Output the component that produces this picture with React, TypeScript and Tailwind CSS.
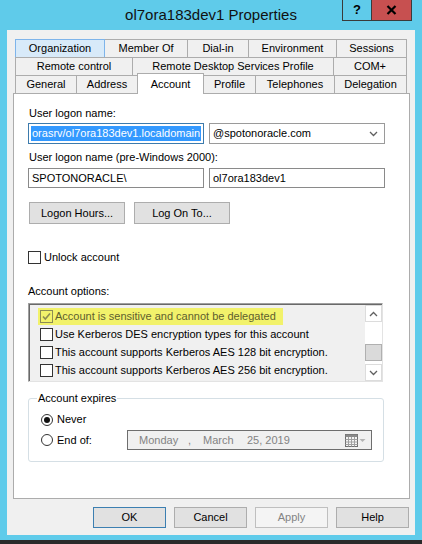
import React from "react";

function Check({ checked = false, hl = false }: { checked?: boolean; hl?: boolean }) {
  return (
    <span
      className={
        hl
          ? "w-[13px] h-[13px] border border-[#8c8c55] bg-transparent inline-flex items-center justify-center shrink-0"
          : "w-[13px] h-[13px] border border-[#333333] bg-white inline-flex items-center justify-center shrink-0"
      }
    >
      {checked && (
        <svg width="11" height="11" viewBox="0 0 11 11">
          <path d="M2 5.5 L4.3 8 L9 2.5" fill="none" stroke="#8c8c50" strokeWidth="1.6" />
        </svg>
      )}
    </span>
  );
}

function Radio({ checked = false }: { checked?: boolean }) {
  return (
    <span className="w-[12px] h-[12px] rounded-full border border-[#333333] bg-white inline-flex items-center justify-center shrink-0">
      {checked && <span className="w-[6px] h-[6px] rounded-full bg-[#111111]" />}
    </span>
  );
}

function Chevron({ up = false }: { up?: boolean }) {
  return (
    <svg width="9" height="6" viewBox="0 0 9 6">
      <path
        d={up ? "M1 5 L4.5 1.5 L8 5" : "M1 1 L4.5 4.5 L8 1"}
        fill="none"
        stroke="#606060"
        strokeWidth="1.3"
      />
    </svg>
  );
}

export default function App() {
  const row1 = [
    { label: "Organization", cls: "w-[90px] border-l border-r border-t border-[#7eb4ea] bg-[#d8eaf9]" },
    { label: "Member Of", cls: "w-[82px] border-t border-[#acacac] bg-[#f0f0f0]" },
    { label: "Dial-in", cls: "w-[61px] border-t border-l border-[#acacac] bg-[#f0f0f0]" },
    { label: "Environment", cls: "w-[88px] border-t border-l border-[#acacac] bg-[#f0f0f0]" },
    { label: "Sessions", cls: "w-[71px] border-t border-l border-r border-[#acacac] bg-[#f0f0f0]" },
  ];
  const row2 = [
    { label: "Remote control", cls: "w-[117px] border-t border-l border-[#acacac] bg-[#f0f0f0]" },
    { label: "Remote Desktop Services Profile", cls: "w-[201px] border-t border-l border-[#acacac] bg-[#f0f0f0]" },
    { label: "COM+", cls: "w-[74px] border-t border-l border-r border-[#acacac] bg-[#f0f0f0]" },
  ];

  return (
    <div className="w-[422px] h-[544px] bg-[#5fcbea] flex flex-col overflow-hidden font-['Liberation_Sans',Arial,sans-serif] text-[11px] text-black">
      {/* Title bar */}
      <div className="relative h-[30px] shrink-0 flex items-center justify-center">
        <span className="text-[15px] text-[#111111] pt-[1px]">ol7ora183dev1 Properties</span>
        <div className="absolute right-[10px] top-0 flex h-[21px]">
          <div className="w-[29px] h-[21px] border-l border-b border-[#3a3a3a] flex items-center justify-center text-[13px] font-bold text-black">
            ?
          </div>
          <div className="w-[41px] h-[21px] border-l border-r border-b border-[#3a3a3a] bg-[#c75050] flex items-center justify-center">
            <svg width="11" height="10" viewBox="0 0 11 10">
              <path d="M1.5 1 L9.5 9 M9.5 1 L1.5 9" stroke="#000" strokeWidth="2.2" />
            </svg>
          </div>
        </div>
      </div>

      {/* Client area */}
      <div className="mx-[7px] h-[505px] shrink-0 bg-[#f0f0f0] flex flex-col">
        {/* Tabs */}
        <div className="ml-[8px] mt-[9px] flex flex-col">
          <div className="flex h-[18px]">
            {row1.map((t) => (
              <div key={t.label} className={`${t.cls} h-[18px] flex items-center justify-center leading-none`}>
                {t.label}
              </div>
            ))}
          </div>
          <div className="flex h-[18px]">
            {row2.map((t) => (
              <div key={t.label} className={`${t.cls} h-[18px] flex items-center justify-center leading-none`}>
                {t.label}
              </div>
            ))}
          </div>
          <div className="flex h-[18px] items-end">
            <div className="w-[61px] h-[18px] border-t border-l border-[#acacac] bg-[#f0f0f0] flex items-center justify-center">General</div>
            <div className="w-[61px] h-[18px] border-t border-l border-[#acacac] bg-[#f0f0f0] flex items-center justify-center">Address</div>
            <div className="relative z-10 w-[67px] h-[21px] -mb-px border-t border-l border-r border-[#acacac] bg-white flex items-start justify-center pt-[2px]">
              Account
            </div>
            <div className="w-[51px] h-[18px] border-t border-[#acacac] bg-[#f0f0f0] flex items-center justify-center">Profile</div>
            <div className="w-[79px] h-[18px] border-t border-l border-[#acacac] bg-[#f0f0f0] flex items-center justify-center">Telephones</div>
            <div className="w-[73px] h-[18px] border-t border-l border-r border-[#acacac] bg-[#f0f0f0] flex items-center justify-center">Delegation</div>
          </div>
        </div>

        {/* Panel */}
        <div className="ml-[6px] w-[397px] h-[406px] bg-white border border-[#acacac] flex flex-col pl-[14px]">
          <div className="mt-[12px] h-[15px] leading-[15px] pl-[1px]">User logon name:</div>
          <div className="mt-[2px] flex gap-[5px]">
            <div className="w-[176px] h-[21px] border border-[#3d7bad] bg-white flex items-center pl-[2px] overflow-hidden">
              <span className="bg-[#3399ff] text-white leading-[15px] px-[1px] whitespace-nowrap">
                orasrv/ol7ora183dev1.localdomain
              </span>
            </div>
            <div className="w-[176px] h-[21px] border border-[#9a9a9a] bg-white flex items-center justify-between pl-[3px] pr-[6px]">
              <span>@spotonoracle.com</span>
              <Chevron />
            </div>
          </div>
          <div className="mt-[6px] h-[15px] leading-[15px] pl-[1px]">User logon name (pre-Windows 2000):</div>
          <div className="mt-[3px] flex gap-[5px]">
            <div className="w-[176px] h-[20px] border border-[#8a8a8a] bg-white flex items-center pl-[3px]">SPOTONORACLE\</div>
            <div className="w-[176px] h-[20px] border border-[#8a8a8a] bg-white flex items-center pl-[3px]">ol7ora183dev1</div>
          </div>
          <div className="mt-[14px] ml-[1px] flex gap-[9px]">
            <div className="w-[96px] h-[22px] border border-[#adadad] bg-[#e1e1e1] flex items-center justify-center">Logon Hours...</div>
            <div className="w-[96px] h-[22px] border border-[#adadad] bg-[#e1e1e1] flex items-center justify-center">Log On To...</div>
          </div>

          <div className="mt-[26px] h-[15px] flex items-center gap-[3px]">
            <Check />
            <span>Unlock account</span>
          </div>

          <div className="mt-[19px] h-[15px] leading-[15px]">Account options:</div>

          {/* Options list */}
          <div className="mt-[4px] w-[355px] h-[79px] border-t border-l border-[#a0a0a0] border-b border-r border-b-[#e3e3e3] border-r-[#e3e3e3] flex">
            <div className="flex-1 border-t border-l border-[#696969] bg-[#f0f0f0] flex">
              <div className="flex-1 flex flex-col pt-[2px] pl-[8px]">
                <div className="h-[18px] flex items-center">
                  <div className="h-[17px] w-[245px] bg-[#f2f26b] flex items-center gap-[2px] pl-[2px] text-[#5e5e2e]">
                    <Check checked hl />
                    <span>Account is sensitive and cannot be delegated</span>
                  </div>
                </div>
                <div className="h-[18px] flex items-center gap-[2px] pl-[2px]">
                  <Check />
                  <span>Use Kerberos DES encryption types for this account</span>
                </div>
                <div className="h-[18px] flex items-center gap-[2px] pl-[2px]">
                  <Check />
                  <span>This account supports Kerberos AES 128 bit encryption.</span>
                </div>
                <div className="h-[18px] flex items-center gap-[2px] pl-[2px]">
                  <Check />
                  <span>This account supports Kerberos AES 256 bit encryption.</span>
                </div>
              </div>
              {/* Scrollbar */}
              <div className="w-[17px] bg-white flex flex-col">
                <div className="h-[17px] border border-[#dcdcdc] flex items-center justify-center">
                  <Chevron up />
                </div>
                <div className="flex-1 flex flex-col justify-end pb-[3px]">
                  <div className="h-[17px] bg-[#dadada] border border-[#b0b0b0]" />
                </div>
                <div className="h-[17px] border border-[#dcdcdc] flex items-center justify-center">
                  <Chevron />
                </div>
              </div>
            </div>
          </div>

          {/* Account expires group */}
          <div className="relative mt-[16px] w-[356px] h-[64px] border border-[#d5dfe5] rounded-[3px] flex flex-col pl-[12px] pt-[13px]">
            <span className="absolute left-[8px] -top-[8px] bg-white px-[1px] leading-[15px]">Account expires</span>
            <div className="h-[15px] flex items-center gap-[4px]">
              <Radio checked />
              <span>Never</span>
            </div>
            <div className="mt-[3px] h-[20px] flex items-center gap-[4px]">
              <Radio />
              <span className="w-[66px]">End of:</span>
              <div className="w-[245px] h-[20px] border border-[#6e6e6e] bg-[#f0f0f0] flex items-center pl-[11px] pr-[5px] text-[#838383]">
                <span className="w-[49px]">Monday</span>
                <span className="w-[15px]">,</span>
                <span className="w-[44px]">March</span>
                <span className="flex-1">25, 2019</span>
                <svg width="21" height="13" viewBox="0 0 21 13">
                  <rect x="0.5" y="0.5" width="12" height="12" fill="#f4f4f4" stroke="#6e6e6e" />
                  <rect x="0.5" y="0.5" width="12" height="2.5" fill="#8a8a8a" />
                  <path
                    d="M3.5 3 V12.5 M6.5 3 V12.5 M9.5 3 V12.5 M0.5 5.5 H12.5 M0.5 8 H12.5 M0.5 10.5 H12.5"
                    stroke="#a0a0a0"
                    strokeWidth="1"
                  />
                  <path d="M14.5 5 L20.5 5 L17.5 8 Z" fill="#b3b3b3" />
                </svg>
              </div>
            </div>
          </div>
        </div>

        {/* Bottom buttons */}
        <div className="mt-[8px] flex justify-end gap-[8px] pr-[6px]">
          <div className="w-[73px] h-[21px] border border-[#3c7fb1] bg-[#e1e1e1] flex items-center justify-center">OK</div>
          <div className="w-[73px] h-[21px] border border-[#adadad] bg-[#e1e1e1] flex items-center justify-center">Cancel</div>
          <div className="w-[73px] h-[21px] border border-[#bfbfbf] bg-[#f4f4f4] flex items-center justify-center text-[#838383]">Apply</div>
          <div className="w-[73px] h-[21px] border border-[#adadad] bg-[#e1e1e1] flex items-center justify-center">Help</div>
        </div>
      </div>
      <div className="h-[5px] shrink-0" />
      <div className="h-[4px] shrink-0 bg-[#2a2a2a]" />
    </div>
  );
}
